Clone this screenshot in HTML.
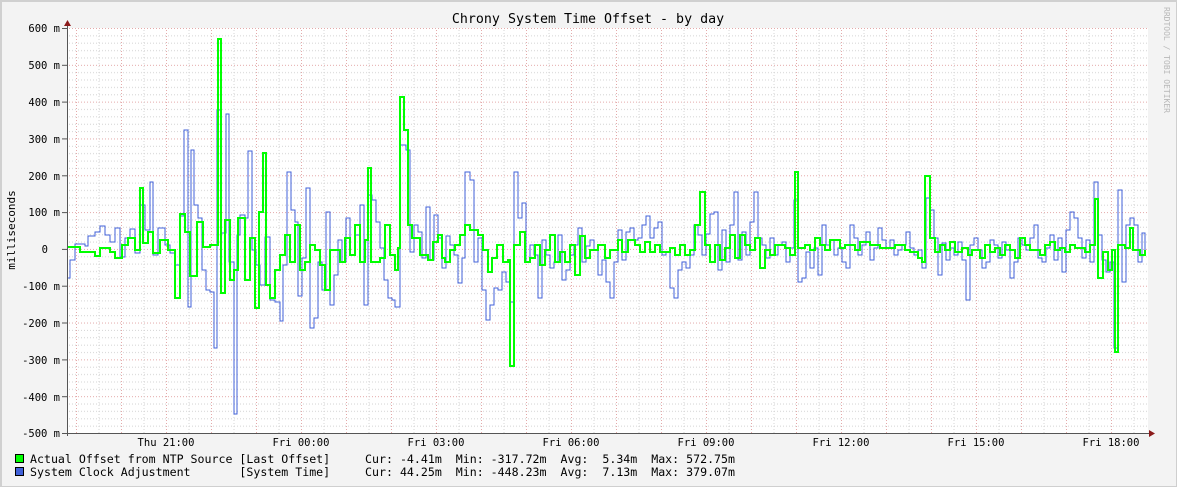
<!DOCTYPE html>
<html><head><meta charset="utf-8"><style>
html,body{margin:0;padding:0;background:#f3f3f3}
svg{display:block}
text{font-family:"DejaVu Sans Mono","Liberation Mono",monospace}
</style></head><body>
<svg width="1177" height="487" viewBox="0 0 1177 487" xmlns="http://www.w3.org/2000/svg">
<defs>
<pattern id="gv" x="76" y="0" width="45" height="500" patternUnits="userSpaceOnUse">
<line x1="0.5" y1="0" x2="0.5" y2="500" stroke="#e4aaaa" stroke-dasharray="1,2"/>
<line x1="23" y1="0" x2="23" y2="500" stroke="#d4d4d4" stroke-dasharray="1,2"/>
</pattern>
<pattern id="gh" x="0" y="28" width="1200" height="36.818" patternUnits="userSpaceOnUse">
<line x1="0" y1="0.5" x2="1200" y2="0.5" stroke="#e4aaaa" stroke-dasharray="1,2"/>
<line x1="0" y1="7.86" x2="1200" y2="7.86" stroke="#d4d4d4" stroke-dasharray="1,2"/>
<line x1="0" y1="15.23" x2="1200" y2="15.23" stroke="#d4d4d4" stroke-dasharray="1,2"/>
<line x1="0" y1="22.59" x2="1200" y2="22.59" stroke="#d4d4d4" stroke-dasharray="1,2"/>
<line x1="0" y1="29.95" x2="1200" y2="29.95" stroke="#d4d4d4" stroke-dasharray="1,2"/>
</pattern>
</defs>
<rect x="0" y="0" width="1177" height="487" fill="#f3f3f3"/>
<rect x="0.5" y="0.5" width="1176" height="486" fill="none" stroke="#cfcfcf"/>
<rect x="1" y="0" width="1176" height="2" fill="#d0d0d0"/>
<rect x="0" y="0" width="2" height="487" fill="#d0d0d0"/>
<rect x="67" y="28" width="1081" height="405" fill="#fff"/>
<rect x="67" y="28" width="1081" height="405" fill="url(#gh)"/>
<rect x="67" y="28" width="1081" height="405" fill="url(#gv)"/>

<path fill="none" stroke="#4060d8" stroke-width="1" d="M67,278 H70 V260 H75 V244 H85 V246 H88 V236 H95 V232 H100 V226 H105 V235 H110 V242 H115 V228 H120 V257 H125 V238 H130 V229 H135 V253 H140 V205 H145 V230 H150 V182 H153 V255 H158 V228 H165 V245 H170 V253 H175 V265 H180 V216 H184 V130 H188 V307 H191 V150 H194 V205 H198 V218 H202 V270 H206 V290 H210 V292 H214 V348 H217 V110 H221 V233 H226 V114 H229 V262 H234 V414 H237 V235 H240 V215 H245 V218 H248 V151 H252 V250 H256 V265 H260 V285 H265 V237 H270 V300 H275 V302 H280 V321 H283 V265 H287 V172 H291 V210 H295 V222 H298 V296 H302 V258 H306 V188 H310 V328 H314 V318 H318 V262 H322 V290 H326 V212 H330 V305 H334 V275 H338 V240 H342 V262 H346 V218 H350 V255 H355 V235 H360 V205 H364 V305 H368 V195 H372 V200 H376 V222 H380 V248 H384 V280 H388 V298 H392 V300 H395 V307 H400 V145 H406 V150 H410 V252 H414 V225 H418 V232 H422 V258 H426 V207 H430 V260 H434 V215 H438 V238 H442 V268 H446 V236 H450 V245 H454 V255 H458 V283 H462 V258 H465 V172 H470 V180 H474 V262 H478 V238 H482 V290 H486 V320 H490 V305 H494 V288 H498 V290 H502 V272 H506 V282 H510 V302 H514 V172 H518 V218 H522 V203 H526 V262 H530 V245 H534 V255 H538 V298 H542 V240 H546 V255 H550 V268 H554 V262 H558 V235 H562 V280 H566 V270 H570 V255 H574 V245 H578 V228 H582 V262 H586 V246 H590 V240 H594 V250 H598 V275 H602 V260 H606 V282 H610 V298 H614 V262 H618 V230 H622 V260 H626 V232 H630 V228 H634 V240 H638 V238 H642 V225 H646 V216 H650 V238 H654 V228 H658 V222 H662 V255 H666 V252 H670 V288 H674 V298 H678 V270 H682 V262 H686 V268 H690 V255 H694 V225 H698 V235 H702 V255 H706 V234 H710 V214 H714 V212 H718 V270 H722 V230 H726 V262 H730 V225 H734 V192 H738 V260 H742 V232 H746 V255 H750 V222 H754 V192 H758 V238 H762 V245 H766 V258 H770 V238 H774 V255 H778 V245 H782 V242 H786 V262 H790 V248 H794 V200 H798 V282 H802 V278 H806 V252 H810 V268 H814 V248 H818 V275 H822 V225 H826 V245 H830 V240 H834 V255 H838 V248 H842 V262 H846 V268 H850 V225 H854 V238 H858 V255 H862 V245 H866 V232 H870 V260 H874 V248 H878 V228 H882 V240 H886 V248 H890 V240 H894 V255 H898 V250 H902 V245 H906 V232 H910 V248 H914 V255 H918 V250 H922 V268 H926 V198 H930 V210 H934 V238 H938 V275 H942 V243 H946 V260 H950 V248 H954 V255 H958 V242 H962 V260 H966 V300 H970 V245 H974 V238 H978 V250 H982 V268 H986 V262 H990 V240 H994 V245 H998 V258 H1002 V242 H1006 V250 H1010 V278 H1014 V262 H1018 V238 H1022 V245 H1026 V250 H1030 V238 H1034 V225 H1038 V258 H1042 V262 H1046 V248 H1050 V235 H1054 V260 H1058 V238 H1062 V272 H1066 V230 H1070 V212 H1074 V218 H1078 V238 H1082 V258 H1086 V240 H1090 V262 H1094 V182 H1098 V235 H1102 V260 H1106 V272 H1110 V262 H1114 V348 H1118 V190 H1122 V282 H1126 V225 H1130 V218 H1134 V225 H1138 V262 H1142 V233 H1145 V250"/>

<path fill="none" stroke="#00ff00" stroke-width="2" d="M67,247 H80 V252 H95 V256 H100 V248 H110 V252 H115 V258 H122 V245 H128 V238 H135 V250 H140 V188 H143 V243 H148 V232 H153 V253 H160 V240 H168 V250 H175 V298 H180 V214 H185 V232 H190 V276 H197 V222 H203 V247 H210 V245 H218 V39 H221 V293 H225 V220 H230 V280 H234 V270 H238 V218 H245 V280 H250 V238 H255 V308 H259 V212 H263 V153 H266 V285 H270 V298 H275 V270 H280 V255 H285 V235 H290 V262 H295 V225 H300 V270 H305 V262 H310 V245 H315 V250 H320 V265 H325 V290 H330 V250 H340 V262 H345 V238 H350 V255 H355 V225 H360 V262 H365 V240 H368 V168 H371 V262 H380 V258 H385 V225 H390 V255 H395 V270 H398 V248 H400 V97 H404 V130 H408 V225 H412 V238 H420 V255 H428 V260 H433 V242 H438 V235 H442 V258 H445 V262 H450 V250 H455 V245 H460 V235 H465 V225 H470 V230 H478 V235 H483 V250 H488 V272 H492 V258 H497 V245 H503 V262 H508 V260 H510 V366 H514 V245 H520 V232 H525 V262 H530 V258 H535 V245 H540 V265 H545 V250 H550 V235 H555 V262 H560 V252 H565 V262 H570 V245 H575 V275 H580 V236 H585 V258 H590 V250 H598 V245 H605 V258 H610 V250 H618 V240 H622 V252 H628 V240 H635 V245 H640 V252 H645 V242 H650 V252 H655 V245 H660 V252 H670 V248 H675 V255 H680 V245 H685 V255 H690 V250 H695 V225 H700 V192 H705 V245 H710 V262 H715 V245 H720 V260 H725 V248 H730 V235 H735 V258 H740 V235 H745 V245 H750 V250 H755 V238 H760 V268 H765 V250 H770 V255 H775 V245 H785 V248 H790 V255 H795 V172 H798 V248 H805 V245 H810 V250 H815 V238 H820 V245 H825 V250 H830 V240 H840 V248 H845 V245 H855 V250 H860 V242 H870 V245 H880 V248 H895 V245 H905 V250 H910 V252 H918 V258 H922 V262 H925 V176 H930 V238 H935 V252 H940 V245 H945 V250 H950 V242 H955 V252 H962 V248 H968 V255 H972 V250 H980 V258 H985 V245 H990 V252 H995 V248 H1000 V255 H1005 V245 H1010 V250 H1015 V258 H1020 V238 H1025 V245 H1030 V250 H1040 V255 H1045 V245 H1050 V242 H1055 V250 H1060 V248 H1065 V252 H1070 V245 H1075 V248 H1085 V252 H1090 V245 H1095 V199 H1098 V278 H1103 V252 H1108 V270 H1112 V250 H1115 V352 H1118 V245 H1125 V248 H1130 V228 H1133 V250 H1140 V255 H1145 V250"/>

<line x1="67.5" y1="26" x2="67.5" y2="436" stroke="#555"/>
<line x1="62" y1="433.5" x2="1150" y2="433.5" stroke="#555"/>
<path d="M64,26 L67.5,20 L71,26 Z" fill="#8b1a1a"/>
<path d="M1149,430 L1155,433.5 L1149,437 Z" fill="#8b1a1a"/>
<g stroke="#555">
<line x1="62" y1="28.5" x2="67" y2="28.5"/><line x1="62" y1="65.3" x2="67" y2="65.3"/><line x1="62" y1="102.1" x2="67" y2="102.1"/><line x1="62" y1="138.9" x2="67" y2="138.9"/><line x1="62" y1="175.8" x2="67" y2="175.8"/><line x1="62" y1="212.6" x2="67" y2="212.6"/><line x1="62" y1="249.4" x2="67" y2="249.4"/><line x1="62" y1="286.2" x2="67" y2="286.2"/><line x1="62" y1="323" x2="67" y2="323"/><line x1="62" y1="359.9" x2="67" y2="359.9"/><line x1="62" y1="396.7" x2="67" y2="396.7"/>
</g>
<g font-size="10.5" fill="#000" text-anchor="end">
<text x="60" y="32">600 m</text><text x="60" y="69">500 m</text><text x="60" y="106">400 m</text><text x="60" y="143">300 m</text><text x="60" y="180">200 m</text><text x="60" y="216">100 m</text><text x="48" y="253">0</text><text x="60" y="290">-100 m</text><text x="60" y="327">-200 m</text><text x="60" y="364">-300 m</text><text x="60" y="401">-400 m</text><text x="60" y="437">-500 m</text>
</g>
<g font-size="10.5" fill="#000" text-anchor="middle">
<text x="166" y="446">Thu 21:00</text><text x="301" y="446">Fri 00:00</text><text x="436" y="446">Fri 03:00</text><text x="571" y="446">Fri 06:00</text><text x="706" y="446">Fri 09:00</text><text x="841" y="446">Fri 12:00</text><text x="976" y="446">Fri 15:00</text><text x="1111" y="446">Fri 18:00</text>
</g>
<text x="588" y="23" font-size="13.3" text-anchor="middle" fill="#000">Chrony System Time Offset - by day</text>
<text transform="translate(15,230) rotate(-90)" font-size="11" text-anchor="middle" fill="#000">milliseconds</text>
<text transform="translate(1164,60) rotate(90)" font-size="8" text-anchor="middle" fill="#b8b8b8">RRDTOOL / TOBI OETIKER</text>

<rect x="15.5" y="454.5" width="8" height="8" fill="#00ff00" stroke="#000"/>
<rect x="15.5" y="467.5" width="8" height="8" fill="#4060d8" stroke="#000"/>
<g font-size="11.6" fill="#000">
<text x="30" y="463" xml:space="preserve">Actual Offset from NTP Source [Last Offset]     Cur: -4.41m  Min: -317.72m  Avg:  5.34m  Max: 572.75m</text>
<text x="30" y="476" xml:space="preserve">System Clock Adjustment       [System Time]     Cur: 44.25m  Min: -448.23m  Avg:  7.13m  Max: 379.07m</text>
</g>
</svg>
</body></html>
